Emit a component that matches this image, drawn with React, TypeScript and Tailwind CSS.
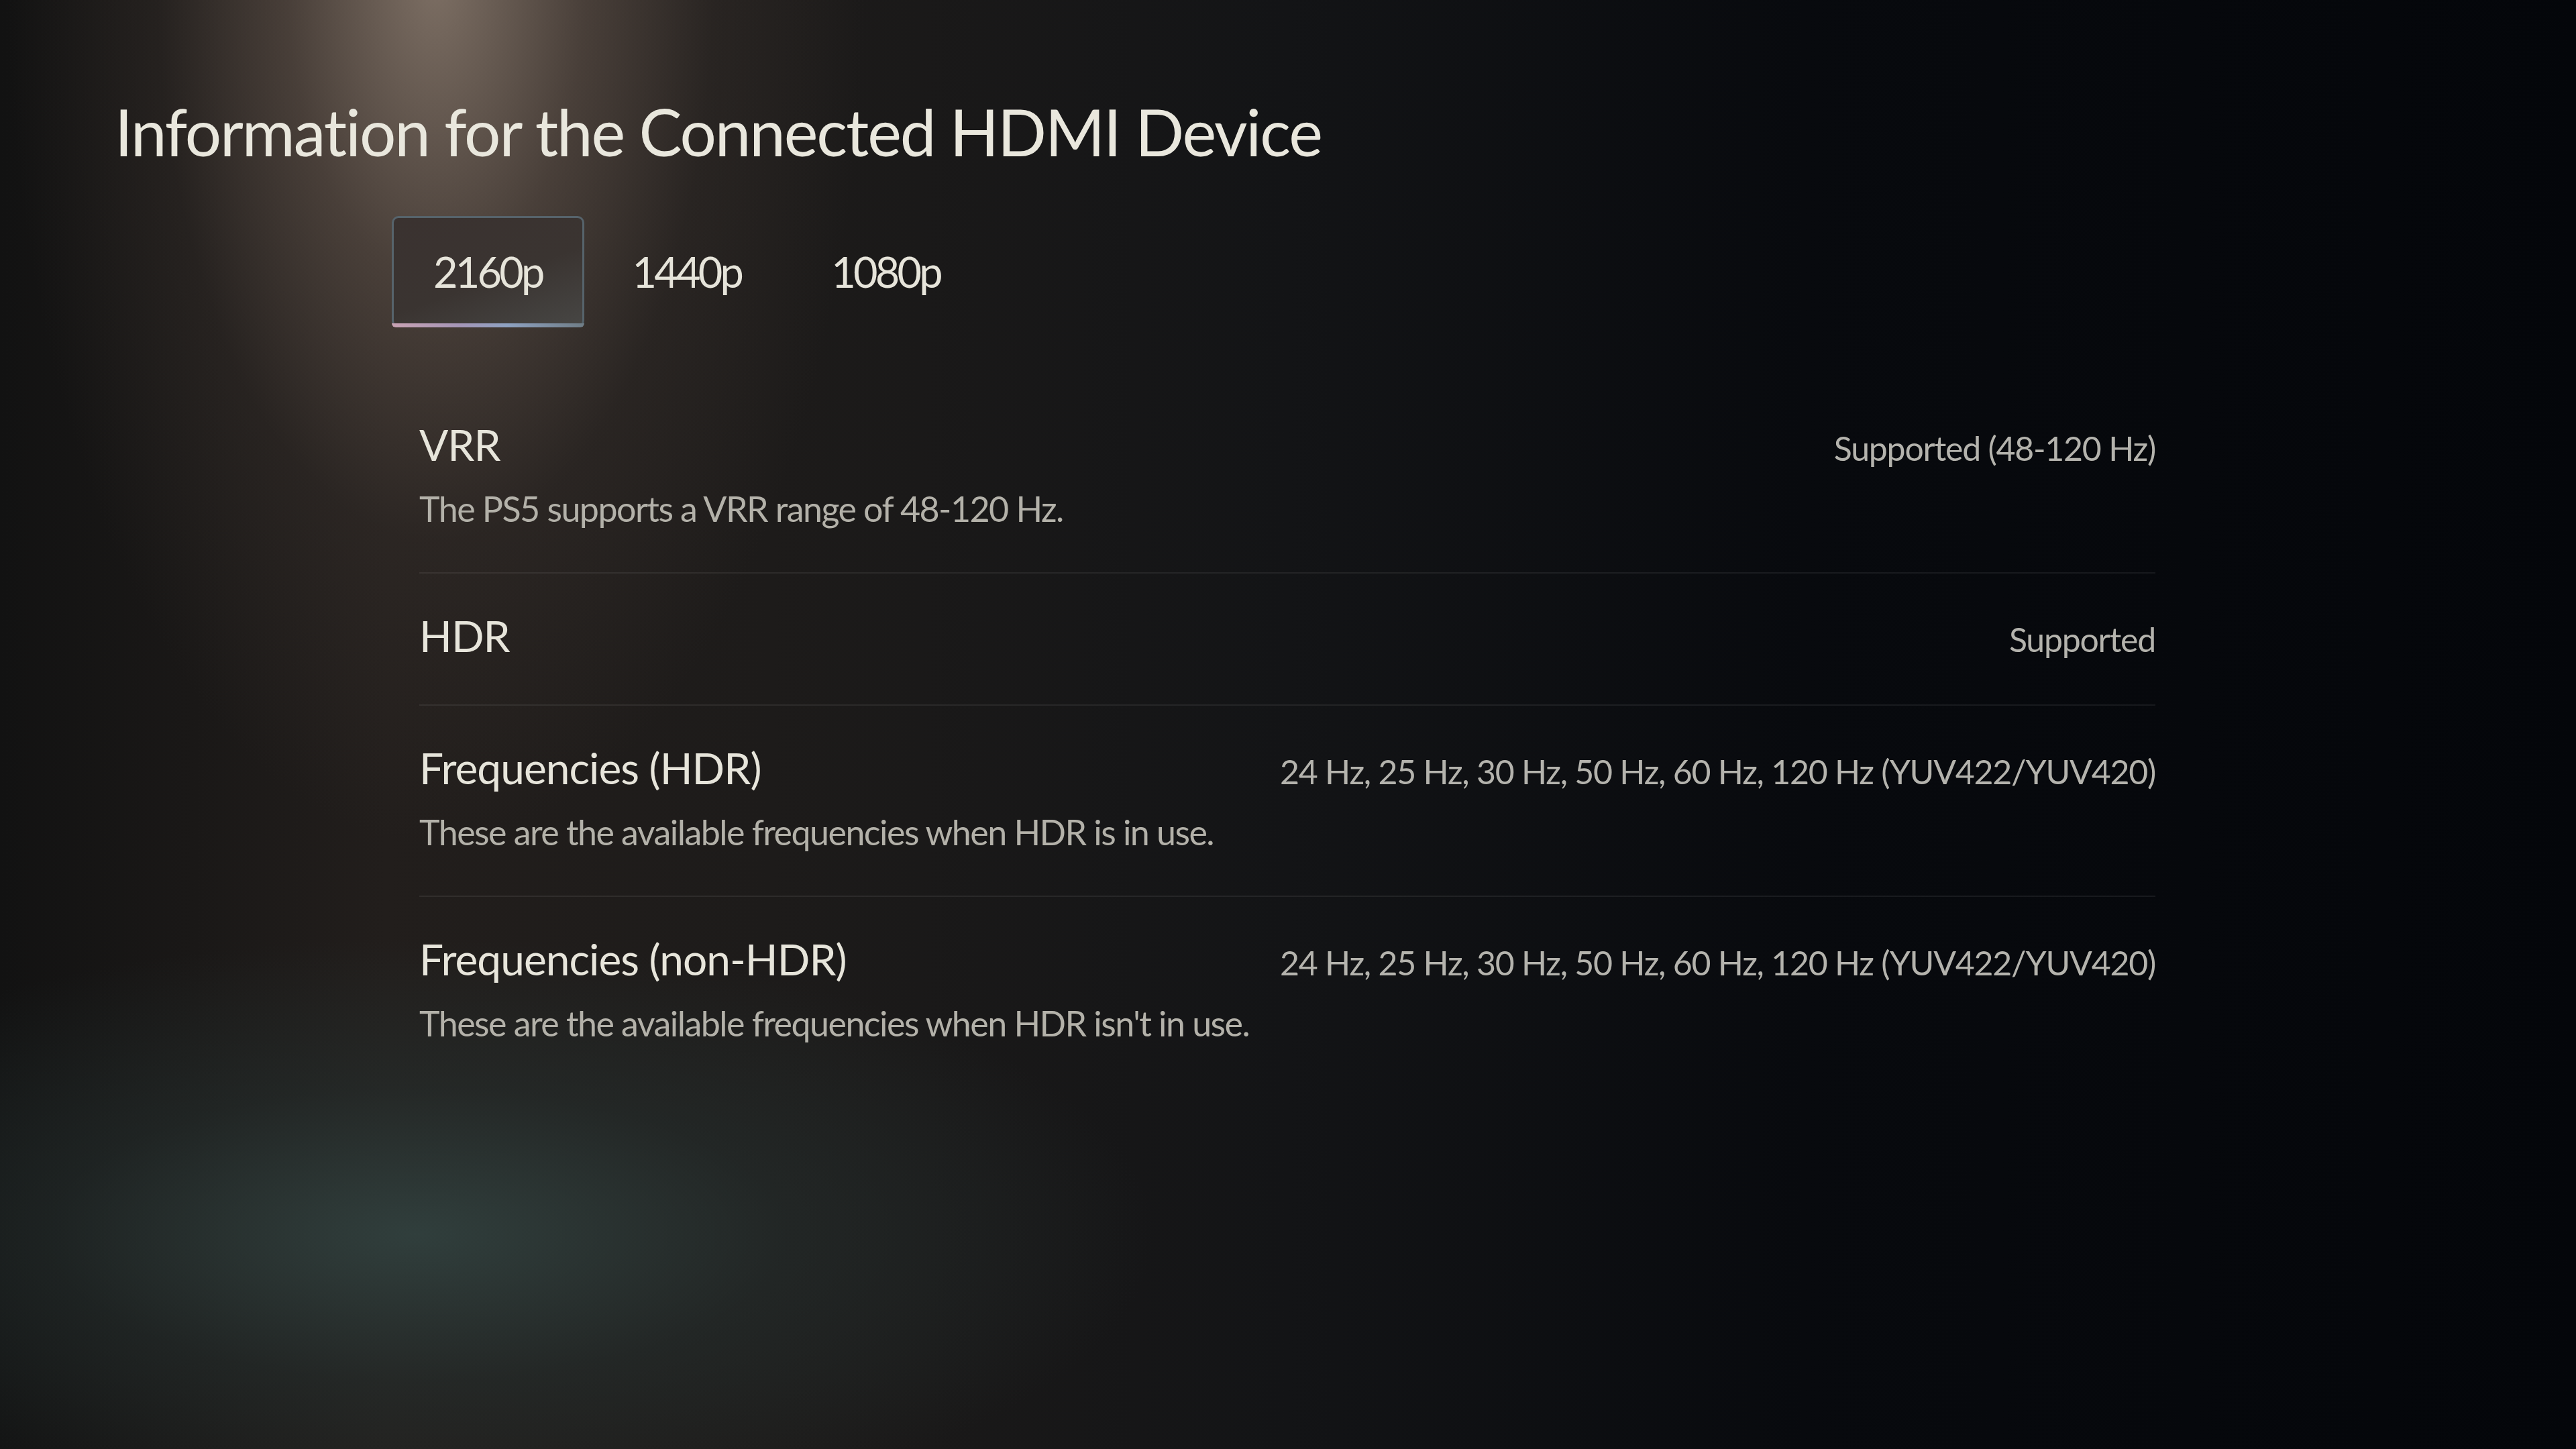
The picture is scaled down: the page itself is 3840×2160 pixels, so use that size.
import React from 'react';

interface InfoRowProps {
  title: string;
  value: string;
  description?: string;
  divider?: boolean;
}

const InfoRow: React.FC<InfoRowProps> = ({ title, value, description, divider = true }) => {
  return (
    <div className={`pt-[53px] pb-[62px] ${divider ? 'border-b-2 border-white/[0.07]' : ''}`}>
      <div className="flex items-baseline justify-between">
        <span className="text-[64px] leading-[1.25] tracking-[-0.015em] text-[#e7e5db]">{title}</span>
        <span className="text-[50px] leading-[1.25] tracking-[-0.025em] text-[#b4b3ad]">{value}</span>
      </div>
      {description && (
        <p className="mt-[23px] text-[52px] leading-[1.25] tracking-[-0.03em] text-[#b3b1a9]">{description}</p>
      )}
    </div>
  );
};

const resolutions = ['2160p', '1440p', '1080p'];

const rows = [
  {
    title: 'VRR',
    value: 'Supported (48-120 Hz)',
    description: 'The PS5 supports a VRR range of 48-120 Hz.',
  },
  {
    title: 'HDR',
    value: 'Supported',
  },
  {
    title: 'Frequencies (HDR)',
    value: '24 Hz, 25 Hz, 30 Hz, 50 Hz, 60 Hz, 120 Hz (YUV422/YUV420)',
    description: 'These are the available frequencies when HDR is in use.',
  },
  {
    title: 'Frequencies (non-HDR)',
    value: '24 Hz, 25 Hz, 30 Hz, 50 Hz, 60 Hz, 120 Hz (YUV422/YUV420)',
    description: "These are the available frequencies when HDR isn't in use.",
  },
];

const App: React.FC = () => {
  return (
    <div className="w-[3840px] h-[2160px] overflow-hidden font-['Lato','Open_Sans',sans-serif] [font-variant-ligatures:no-common-ligatures] bg-[radial-gradient(ellipse_640px_1300px_at_650px_-40px,rgba(135,120,108,0.9),rgba(100,86,77,0.6)_35%,rgba(66,57,52,0.3)_65%,transparent_100%),radial-gradient(ellipse_1100px_440px_at_620px_1840px,rgba(50,66,64,0.9),rgba(40,52,51,0.45)_50%,transparent_100%),linear-gradient(to_right,#121212_0%,#221e1c_15%,#1d1b1a_30%,#131416_50%,#080a0e_70%,#04060a_100%)]">
      <h1 className="ml-[171px] pt-[148px] text-[96px] leading-none tracking-[-0.022em] text-[#e9e7dd]">
        Information for the Connected HDMI Device
      </h1>

      <div className="mt-[78px] ml-[584px] flex gap-[10px]">
        {resolutions.map((res, i) => (
          <div
            key={res}
            className={`relative h-[166px] px-[59px] flex items-center rounded-[10px] border-[3px] text-[63px] tracking-[-0.06em] text-[#e6e4da] ${
              i === 0
                ? 'border-[#56636b] bg-[linear-gradient(160deg,#3a3230_0%,#3a3431_55%,#474644_100%)]'
                : 'border-transparent'
            }`}
          >
            {res}
            {i === 0 && (
              <span className="absolute -left-[3px] -right-[3px] -bottom-[3px] h-[6px] rounded-b-[10px] bg-[linear-gradient(to_right,#c9a3b4,#a596b8_35%,#8ea2c2_60%,#6f7d86_100%)]" />
            )}
          </div>
        ))}
      </div>

      <div className="mt-[82px] ml-[625px] w-[2588px]">
        {rows.map((row, i) => (
          <InfoRow
            key={row.title}
            title={row.title}
            value={row.value}
            description={row.description}
            divider={i < rows.length - 1}
          />
        ))}
      </div>
    </div>
  );
};

export default App;
